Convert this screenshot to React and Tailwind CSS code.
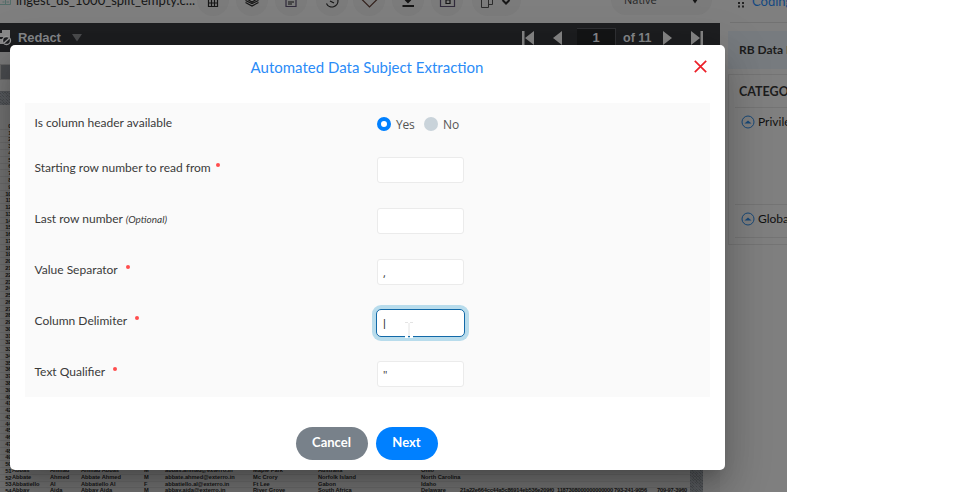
import React from "react";

const people = [
  { n: 51, c: ["Abbas", "Ahmad", "Ahmad Abbas", "M", "abbas.ahmad@exterro.in", "Maple Park", "Australia", "Ohio", "", "", ""] },
  { n: 52, c: ["Abbate", "Ahmed", "Abbate Ahmed", "M", "abbate.ahmed@exterro.in", "Mc Crory", "Norfolk Island", "North Carolina", "", "", ""] },
  { n: 53, c: ["Abbatiello", "Al", "Abbatiello Al", "F", "abbatiello.al@exterro.in", "Ft Lee", "Gabon", "Idaho", "", "", ""] },
  { n: 54, c: ["Abbay", "Aida", "Abbay Aida", "M", "abbay.aida@exterro.in", "River Grove", "South Africa", "Delaware", "21a22e664cc44a5c86914eb536e209f0", "1187308000000000000", "793-241-9056", "709-97-3960"] },
];
const widths = ["w-[38px]", "w-[31px]", "w-[63px]", "w-[21px]", "w-[88px]", "w-[65px]", "w-[103px]", "w-[39px]", "w-[97px]", "w-[57px]", "w-[43px]", "w-[34px]"];
const hatch =
  "bg-[#4a4d50] bg-[repeating-linear-gradient(45deg,transparent_0_1px,#5a5d61_1px_2px),repeating-linear-gradient(-45deg,transparent_0_1px,#55585b_1px_2px)]";

function Circle({ children, className = "" }) {
  return (
    <div className={`flex h-8 w-8 shrink-0 items-center justify-center rounded-full bg-[#7b7b7b] ${className}`}>
      <svg className="shrink-0" width="18" height="18" viewBox="0 0 18 18" fill="none" stroke="#151515" strokeWidth="1.2">
        {children}
      </svg>
    </div>
  );
}

function TopToolbar() {
  return (
    <div className="flex h-[23px] items-end overflow-hidden bg-[#7f7f7f] font-[Lato,sans-serif]">
      <div className="flex h-[39px] w-full shrink-0 items-start">
        <svg className="mt-[11px] mr-[5px] shrink-0" width="11" height="11" viewBox="0 0 11 11" fill="none" stroke="#536d69">
          <path d="M0 .5H10.500V9.500H0M0 4.500H10M2.500 7H4.500M6.500 7H9M5.500 4.500V9" />
        </svg>
        <span className="mt-[6px] w-[181px] shrink-0 whitespace-nowrap text-[13px] leading-5 text-[#161616]">
          ingest_ds_1000_split_empty.c...
        </span>
        <Circle>
          <path d="M4.500 3.500H13.500V15.500H4.500ZM4.500 8.500H13.500M4.500 12H13.500M7.500 8.500V15.500M10.500 8.500V15.500" />
        </Circle>
        <Circle className="ml-[7px]">
          <path d="M9 4L15 7.500L9 11L3 7.500ZM2.500 9.500L9 12.500L15.500 9.500M2.500 11.500L9 15L15.500 11.500" />
        </Circle>
        <Circle className="ml-[7px]">
          <path d="M4 3.500H14V15.500H4Z" stroke="#302a3b" />
          <path d="M6 8.500H12M6 11H12M6 13H10" />
        </Circle>
        <Circle className="ml-[9px]">
          <path d="M3.500 12.500A6 6 0 1 0 9 4M7 10L11 12" />
        </Circle>
        <Circle className="ml-[5px]">
          <path d="M2 8.500L9.500 1L17 8.500L9.500 16Z" stroke="#33211c" />
        </Circle>
        <Circle className="ml-[7px]">
          <path d="M9 3V11M6.500 8.500L9 11L11.500 8.500M3.500 15H15" strokeWidth="2" />
        </Circle>
        <Circle className="ml-[7px]">
          <path d="M2.500 3.500H16.500V15.500H2.500Z" stroke="#302a3b" />
          <path d="M8 5V12.500H12V9H8" />
        </Circle>
        <div className="ml-[9px] flex h-8 w-[49px] shrink-0 items-center rounded-full bg-[#7b7b7b] pl-[6px]">
          <svg width="34" height="18" viewBox="0 0 34 18" fill="none" stroke="#2b2b2b">
            <path d="M3.500 3.500H10.500V16.500H3.500ZM10.500 5.500H14.500V13.500H10.500" />
            <path d="M24.500 9L28 12.500L31.500 9" strokeWidth="2" stroke="#161616" />
          </svg>
        </div>
        <div className="ml-[90px] flex h-[31px] w-[101px] shrink-0 items-start rounded-full bg-[#7b7b7b] pl-[13px] text-[11px] leading-4 text-[#252525]">
          <span className="mt-[8px] w-[67px] font-[Open_Sans,sans-serif]">Native</span>
          <svg className="mt-[13px]" width="8" height="8" viewBox="0 0 8 8">
            <path d="M1 2H7L4 6.500Z" fill="#151515" />
          </svg>
        </div>
      </div>
    </div>
  );
}

function RedactBar() {
  return (
    <div className="flex h-[29px] items-center bg-[#1d1e20] font-[Liberation_Sans,sans-serif] text-[14px] font-bold text-[#85878a]">
      <svg className="mr-[6px] shrink-0" width="12" height="16" viewBox="0 0 12 16">
        <path d="M0 3H2V0H10V7H0Z" fill="#8a8a8a" />
        <path d="M0 9H3V14H0Z" fill="#8a8a8a" />
        <circle cx="6.500" cy="10.500" r="4" fill="#1d1e20" stroke="#999" strokeWidth="1.300" />
        <path d="M4 13L9.500 8" stroke="#999" strokeWidth="1.300" />
      </svg>
      <span className="w-[54px] text-[13px] tracking-[-0.1px]">Redact</span>
      <svg width="10" height="8" viewBox="0 0 10 8">
        <path d="M0 0H10L5 7.500Z" fill="#4b4c4e" />
      </svg>
      <svg className="ml-[440px]" width="12" height="16" viewBox="0 0 12 16" fill="#858585">
        <path d="M0 1H2.500V15H0ZM12 1V15L3 8Z" />
      </svg>
      <svg className="ml-[19px]" width="9" height="16" viewBox="0 0 9 16" fill="#858585">
        <path d="M9 1V15L0 8Z" />
      </svg>
      <div className="ml-[15px] mt-[5px] flex h-[24px] w-[39px] items-center justify-center border-r border-t border-[#303134] bg-[#141516] pb-[6px] text-[13px]">1</div>
      <span className="ml-[7px] w-[40px] whitespace-nowrap pt-px text-[12.500px]">of 11</span>
      <svg width="9" height="16" viewBox="0 0 9 16" fill="#858585">
        <path d="M0 1V15L9 8Z" />
      </svg>
      <svg className="ml-[19px]" width="12" height="16" viewBox="0 0 12 16" fill="#858585">
        <path d="M0 1L9 8L0 15ZM9.500 1H12V15H9.500Z" />
      </svg>
    </div>
  );
}

function Sheet() {
  return (
    <div className="flex h-[387px] overflow-hidden">
      <div className="w-[690px] shrink-0 bg-[#747474] pt-[18px] font-[Liberation_Sans,sans-serif] text-[6px] font-bold leading-none text-[#151515]">
        {Array.from({ length: 55 }, (_, n) => {
          const person = people.find((p) => p.n === n);
          return (
            <div key={n} className="flex h-[6.766px] items-center whitespace-nowrap border-b border-[#6c6c6c]">
              <span className="w-[11.500px] shrink-0 text-right text-[6px] tracking-[-0.2px]">{n}</span>
              {person && (
                <div className="flex pl-[0.5px] text-[5.700px]">
                  {person.c.map((t, i) => (
                    <span key={i} className={`shrink-0 ${widths[i]} ${i > 7 ? "tracking-[-0.2px]" : ""}`}>{t}</span>
                  ))}
                </div>
              )}
            </div>
          );
        })}
      </div>
      <div className={`w-[13px] shrink-0 ${hatch}`} />
      <div className="w-[17px] bg-[#7b7b7b]" />
    </div>
  );
}

function CodingItem({ label, className }) {
  return (
    <div className={`flex border-t border-[#747474] pl-[6px] pt-[7px] ${className}`}>
      <svg className="shrink-0" width="14" height="14" viewBox="0 0 14 14">
        <circle cx="7" cy="7" r="6" fill="none" stroke="#174878" />
        <path d="M3.500 8.500L7 5.500L10.500 8.500Z" fill="#174878" />
      </svg>
      <span className="ml-[3px] whitespace-nowrap text-[12px] leading-[14px] text-[#111]">{label}</span>
    </div>
  );
}

function CodingPanel() {
  return (
    <div className="flex w-[67px] flex-col overflow-hidden bg-[#7f7f7f] pl-[8px] font-[Lato,sans-serif]">
      <div className="ml-[2px] flex h-[23px] shrink-0 items-start border-b border-[#727272] pl-[8px]">
        <svg className="mt-px shrink-0" width="6" height="7" viewBox="0 0 6 7" fill="#222">
          <path d="M0 1H2V3H0ZM4 1H6V3H4ZM0 4.500H2V6.500H0ZM4 4.500H6V6.500H4Z" />
        </svg>
        <span className="-mt-[7px] ml-[8px] text-[13px] leading-4 text-[#124882]">Coding</span>
      </div>
      <div className="mt-[8px] h-[38px] shrink-0 whitespace-nowrap bg-[#777b7f] pl-[11px] text-[12px] font-bold leading-[38px] text-[#1c1c1c]">RB Data Fields</div>
      <div className="mt-[5px] h-[171px] shrink-0 border-y border-l border-[#747474] pl-[6px]">
        <div className="h-[32px] pl-[4px] text-[12.500px] font-bold leading-[34px] text-[#1c1c1c]">CATEGORY</div>
        <CodingItem label="Privilege" className="h-[97px]" />
        <CodingItem label="Global" className="h-[34px] border-b" />
      </div>
    </div>
  );
}

function Label({ children, required, gap = "ml-[5px]" }) {
  return (
    <div className="flex h-5 w-[342.500px] shrink-0 items-start text-[12px] leading-5 text-[#3a3a3a]">
      <span className="whitespace-nowrap">{children}</span>
      {required && <span className={`mt-[5px] h-[4px] w-[4px] rounded-full bg-[#ff4d4d] ${gap}`} />}
    </div>
  );
}

function Field({ value = "" }) {
  return <div className="-mt-px h-[26px] w-[87px] rounded-[3px] border border-[#ebebeb] bg-white pl-[5px] font-[Open_Sans,sans-serif] text-[11px] leading-[25px] text-[#333]">{value}</div>;
}

function Modal() {
  return (
    <div className="absolute left-[10px] top-[45px] flex h-[425px] w-[715px] flex-col rounded-[5px] bg-white px-[15px] font-[Lato,sans-serif] shadow-[0_11px_15px_-7px_rgba(0,0,0,0.2),0_24px_38px_3px_rgba(0,0,0,0.14),0_9px_46px_8px_rgba(0,0,0,0.12)]">
      <div className="flex h-[58px] shrink-0 items-start justify-between pt-[10px]">
        <span className="w-[15px]" />
        <h1 className="text-[15px] leading-6 text-[#2b8cf7]">Automated Data Subject Extraction</h1>
        <svg className="mr-[3px] mt-[5px]" width="13" height="13" viewBox="0 0 13 13" stroke="#ec2029" strokeWidth="1.700">
          <path d="M.8 .8L12.200 12.200M12.200 .8L.8 12.200" />
        </svg>
      </div>
      <div className="h-[294px] shrink-0 bg-[#fafafa] pl-[9.500px] pt-[10px]">
        <div className="flex h-[45px]">
          <Label>Is column header available</Label>
          <div className="mt-[4px] flex h-[14px] items-center font-[Open_Sans,sans-serif] text-[12px] text-[#555]">
            <span className="h-[14px] w-[14px] rounded-full border-[4px] border-[#0080ff] bg-white" />
            <span className="ml-[5px] mt-px w-[28px] tracking-[-0.2px]">Yes</span>
            <span className="h-[14px] w-[14px] rounded-full bg-[#c9d3da]" />
            <span className="ml-[5px] mt-px">No</span>
          </div>
        </div>
        <div className="flex h-[51px] items-start">
          <Label required>Starting row number to read from</Label>
          <Field />
        </div>
        <div className="flex h-[51px] items-start">
          <Label>
            Last row number <i className="text-[10px]">(Optional)</i>
          </Label>
          <Field />
        </div>
        <div className="flex h-[51px] items-start">
          <Label required gap="ml-[8px]">Value Separator</Label>
          <Field value="," />
        </div>
        <div className="flex h-[51px] items-start">
          <Label required gap="ml-[8px]">Column Delimiter</Label>
          <div className="relative -ml-px -mt-[2px] flex h-[28px] w-[89px] items-center rounded-[5px] border border-[#1269a8] bg-white pl-[6px] shadow-[0_0_0_4px_#b8dcec]">
            <span className="font-[Liberation_Sans,sans-serif] text-[11px] leading-none text-[#333]">|</span>
            <svg className="absolute left-[28px] top-[11px]" width="8" height="17" viewBox="0 0 8 17" fill="none" stroke="#e4e4e4">
              <path d="M0 1.500H3M5 1.500H8M4 2V15" />
              <path d="M0 16H3M5 16H8" stroke="#fff" strokeWidth="2" />
            </svg>
          </div>
        </div>
        <div className="flex items-start">
          <Label required gap="ml-[8px]">Text Qualifier</Label>
          <Field value={'"'} />
        </div>
      </div>
      <div className="flex justify-center gap-2 pr-[2px] pt-[30px] text-[13px] font-bold text-white">
        <button className="h-[33px] w-[72px] rounded-full bg-[#78818a] pb-[2px]">Cancel</button>
        <button className="h-[33px] w-[62px] rounded-full bg-[#0080ff] pb-[2px]">Next</button>
      </div>
    </div>
  );
}

export default function App() {
  return (
    <div className="h-[492px] w-[964px] overflow-hidden bg-white">
      <div className="relative flex h-[492px] w-[787px] overflow-hidden bg-[#7f7f7f]">
        <div className="w-[720px] shrink-0">
          <TopToolbar />
          <RedactBar />
          <div className="h-[39px] bg-[#7a7a7a] pt-[12px]">
            <div className="h-[16px] w-[40px] border border-[#666] bg-[#4b4d50]" />
          </div>
          <div className={`h-[14px] border-t border-[#55575a] ${hatch}`} />
          <Sheet />
        </div>
        <CodingPanel />
        <Modal />
      </div>
    </div>
  );
}
